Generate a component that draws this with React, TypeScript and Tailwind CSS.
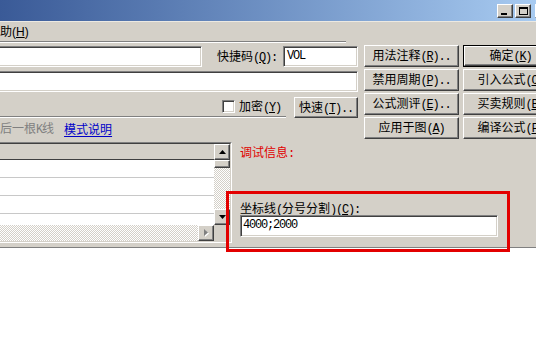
import React from "react";

function T({ s }: { s: string }) {
  const parts = s.match(/[\x00-\x7f]+|[^\x00-\x7f]+/g) || [];
  return (
    <span className="whitespace-nowrap">
      {parts.map((p, i) => {
        if (/^[\x00-\x7f]/.test(p)) {
          const idx = p.indexOf("&");
          if (idx >= 0) {
            return (
              <span key={i} className="font-['Liberation_Mono',monospace] tracking-[-1.2px]">
                {p.slice(0, idx)}
                <span className="underline underline-offset-[1px]">{p[idx + 1]}</span>
                {p.slice(idx + 2)}
              </span>
            );
          }
          return (
            <span key={i} className="font-['Liberation_Mono',monospace] tracking-[-1.2px]">
              {p}
            </span>
          );
        }
        return <span key={i}>{p}</span>;
      })}
    </span>
  );
}

const RAISED =
  "bg-[#d4d0c8] border border-t-white border-l-white border-r-[#404040] border-b-[#404040] shadow-[inset_-1px_-1px_0_#808080]";
const SUNKEN =
  "bg-white border border-t-[#808080] border-l-[#808080] border-b-white border-r-white shadow-[inset_1px_1px_0_#404040,inset_-1px_-1px_0_#d4d0c8]";
const CHECKER =
  "bg-[#d4d0c8] bg-[image:repeating-conic-gradient(#ffffff_0_25%,#d4d0c8_0_50%)] bg-[length:2px_2px]";

function Btn({ label, className = "" }: { label: string; className?: string }) {
  return (
    <div className={`${RAISED} flex items-center justify-center whitespace-nowrap ${className}`}>
      <span className="leading-[14px]">
        <T s={label} />
      </span>
    </div>
  );
}

function Arrow({ dir, color = "#000000" }: { dir: "up" | "down"; color?: string }) {
  const pts = dir === "up" ? "0,4 7,4 3.5,0" : "0,0 7,0 3.5,4";
  return (
    <svg width={7} height={4} viewBox="0 0 7 4">
      <polygon points={pts} fill={color} />
    </svg>
  );
}

export default function App() {
  return (
    <div className="relative w-[536px] h-[341px] overflow-hidden bg-white text-[12px] leading-[14px] text-black font-['Noto_Sans_CJK_SC',sans-serif]">
      <div className="h-[248px] bg-[#d4d0c8] border-b border-b-[#808080] flex flex-col overflow-hidden">
        {/* title bar */}
        <div className="h-[21px] shrink-0 bg-linear-to-r from-[#3a5a97] to-[#a8cbf1] flex items-center pl-[497px] gap-[2px]">
          <div className={`${RAISED} w-[16px] h-[14px] shrink-0 flex items-end pl-[3px] pb-[2px]`}>
            <div className="w-[6px] h-[2px] bg-black" />
          </div>
          <div className={`${RAISED} w-[16px] h-[14px] shrink-0 flex items-center justify-center`}>
            <div className="w-[9px] h-[8px] border border-black border-t-2" />
          </div>
          <div className={`${RAISED} ml-[2px] w-[16px] h-[14px] shrink-0`} />
        </div>
        {/* menu */}
        <div className="h-[20px] shrink-0 flex items-center border-t border-t-[#ece9e2]">
          <div className="h-[14px] flex items-center whitespace-nowrap font-['Liberation_Sans','Noto_Sans_CJK_SC',sans-serif]">
            <span>
              助(<span className="underline">H</span>)
            </span>
          </div>
        </div>
        <div className="w-[346px] h-[2px] shrink-0 border-t border-t-[#808080] border-b border-b-white" />

        {/* top section */}
        <div className="flex shrink-0">
          <div className="w-[358px] shrink-0 flex flex-col pt-[3px]">
            <div className="h-[21px] flex items-center">
              <div className={`${SUNKEN} -ml-[4px] w-[206px] h-[21px] shrink-0`} />
              <div className="ml-[15px] h-[14px] flex items-center">
                <T s="快捷码(&Q):" />
              </div>
              <div className={`${SUNKEN} ml-auto w-[75px] h-[21px] shrink-0 pl-[3px] pt-[2px]`}>
                <div className="h-[14px] font-['Liberation_Mono',monospace] tracking-[-1.2px] leading-[14px]">VOL</div>
              </div>
            </div>
            <div className="h-[21px] mt-[4px]">
              <div className={`${SUNKEN} -ml-[4px] w-[362px] h-[21px]`} />
            </div>
            <div className="h-[21px] mt-[5px] flex items-start">
              <div className="w-[286px] h-[20px] shrink-0 border-b border-b-[#808080] shadow-[0_1px_0_#ffffff] flex items-center justify-end pr-[5px] gap-[4px]">
                <div className={`${SUNKEN} w-[13px] h-[13px] shrink-0`} />
                <div className="h-[14px] flex items-center">
                  <T s="加密(&Y)" />
                </div>
              </div>
              <Btn label="快速(&T).." className="ml-[8px] w-[64px] h-[21px] shrink-0" />
            </div>
            <div className="mt-[4px] h-[14px] flex items-center whitespace-nowrap">
              <div className="h-[14px] flex items-center text-[#808080]">
                <T s="后一根K线" />
              </div>
              <div className="ml-[10px] h-[14px] text-[#0000c8] underline underline-offset-[2px]">模式说明</div>
            </div>
          </div>
          <div className="ml-[6px] pt-[2px] grid grid-cols-[95px_95px] gap-x-[4px] gap-y-[2px] shrink-0">
            <Btn label="用法注释(&R).." className="h-[22px]" />
            <div className="h-[22px] border border-black">
              <Btn label="确定(&K)" className="h-full" />
            </div>
            <Btn label="禁用周期(&P).." className="h-[22px]" />
            <Btn label="引入公式(&O)" className="h-[22px]" />
            <Btn label="公式测评(&E).." className="h-[22px]" />
            <Btn label="买卖规则(&B)" className="h-[22px]" />
            <Btn label="应用于图(&A)" className="h-[22px]" />
            <Btn label="编译公式(&F)" className="h-[22px]" />
          </div>
        </div>

        {/* bottom section */}
        <div className="flex flex-1 mt-[3px]">
          <div className="w-[232px] shrink-0">
            <div className="-ml-[4px] w-[236px] h-[101px] border border-t-[#808080] border-l-[#808080] border-b-white border-r-white">
              <div className="w-full h-full border border-t-[#404040] border-l-[#404040] border-b-[#d4d0c8] border-r-[#d4d0c8] grid grid-cols-[1fr_16px] grid-rows-[1fr_16px]">
                <div className="bg-white overflow-hidden flex flex-col">
                  <div className="h-[16px] shrink-0 bg-[#d4d0c8] border-b border-b-[#404040]" />
                  <div className="h-[18px] shrink-0 border-b border-b-[#c8c8c8]" />
                  <div className="h-[18px] shrink-0 border-b border-b-[#c8c8c8]" />
                  <div className="h-[18px] shrink-0 border-b border-b-[#c8c8c8]" />
                  <div className="h-[18px] shrink-0 border-b border-b-[#c8c8c8]" />
                </div>
                <div className="flex flex-col">
                  <div className={`${RAISED} h-[16px] shrink-0 flex items-center justify-center`}>
                    <Arrow dir="up" />
                  </div>
                  <div className={`${RAISED} h-[8px] shrink-0`} />
                  <div className={`${CHECKER} flex-1`} />
                  <div className={`${RAISED} h-[16px] shrink-0 flex items-center justify-center`}>
                    <Arrow dir="down" />
                  </div>
                </div>
                <div className="flex">
                  <div className={`${CHECKER} flex-1`} />
                  <div className={`${RAISED} w-[16px] shrink-0 flex items-center justify-center`}>
                    <svg width="5" height="8" viewBox="0 0 5 8">
                      <polygon points="1,1 1,8 5,4.5" fill="#ffffff" />
                      <polygon points="0,0 0,7 4,3.5" fill="#808080" />
                    </svg>
                  </div>
                </div>
                <div className="bg-[#d4d0c8]" />
              </div>
            </div>
          </div>
          <div className="flex-1 flex flex-col pl-[8px] pt-[4px]">
            <div className="h-[14px] flex items-center text-[#e00000]">
              <T s="调试信息:" />
            </div>
            <div className="mt-[42px] h-[13px] flex items-center">
              <T s="坐标线(分号分割)(&C):" />
            </div>
            <div className={`${SUNKEN} w-[258px] h-[22px] shrink-0 pl-[2px] pt-[2px]`}>
              <div className="h-[14px] font-['Liberation_Mono',monospace] tracking-[-1.2px] leading-[14px]">4000;2000</div>
            </div>
          </div>
        </div>
      </div>

      {/* red annotation frame */}
      <div className="absolute left-[226px] top-[191px] w-[284px] h-[61px] border-[3px] border-[#e30000]" />
    </div>
  );
}
